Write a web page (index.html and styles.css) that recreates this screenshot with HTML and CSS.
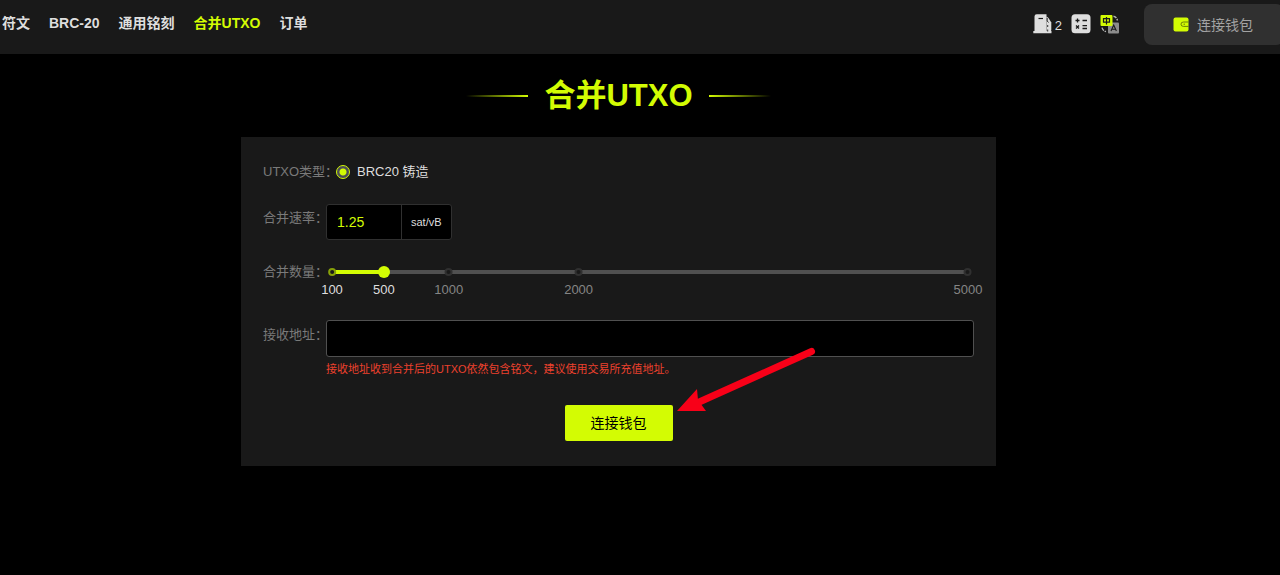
FILE: index.html
```html
<!DOCTYPE html>
<html lang="zh-CN">
<head>
<meta charset="utf-8">
<meta name="viewport" content="width=device-width, initial-scale=1">
<title>合并UTXO</title>
<link rel="stylesheet" href="styles.css">
</head>
<body>
<header class="topbar">
  <nav class="nav">
    <a class="nav-link" href="#">符文</a>
    <a class="nav-link" href="#">BRC-20</a>
    <a class="nav-link" href="#">通用铭刻</a>
    <a class="nav-link active" href="#">合并UTXO</a>
    <a class="nav-link" href="#">订单</a>
  </nav>
  <div class="tools">
    <button class="tool" type="button" aria-label="Gas 2">
      <svg width="20" height="20" viewBox="0 0 20 20" aria-hidden="true">
        <path d="M1.500 17V2.500Q1.500 .3 3.700 .3H13.500V17H18.500V19.300H.3V17Z" fill="#dedede"/>
        <path d="M13.500 2.500L15.500 4L18.300 8.500V16Q18.300 18 16.500 18H13.500Z" fill="#dedede"/>
        <path d="M5.500 4.500H10" stroke="#1a1a1a" stroke-width="1.200"/>
        <path d="M14.200 4V7L15.500 8.500M14.700 11V13M14.700 15.500V17.500" fill="none" stroke="#1a1a1a" stroke-width=".9"/>
      </svg>
      <span class="gas">2</span>
    </button>
    <button class="tool" type="button" aria-label="计算器">
      <svg width="20" height="20" viewBox="0 0 20 20" aria-hidden="true">
        <rect x=".5" y=".3" width="19" height="19" rx="3.500" fill="#dedede"/>
        <path d="M4.500 6.500H8.500M6.500 4.500V8.500M11.500 6.500H16M5 11.500L8 14.500M8 11.500L5 14.500M11.500 11.700H16M11.500 14.500H16" stroke="#1a1a1a" stroke-width="1.300"/>
      </svg>
    </button>
    <button class="tool" type="button" aria-label="语言">
      <svg width="20" height="20" viewBox="0 0 20 20" aria-hidden="true">
        <rect x="8" y="8.500" width="11" height="11" rx="1" fill="#8c8c8c"/>
        <path d="M11 17L13.700 11L16.400 17M12 15.200H15.400" fill="none" stroke="#1a1a1a" stroke-width="1.100"/>
        <rect x=".5" y="1" width="12" height="11" rx="1" fill="#d3fc03"/>
        <path d="M3.500 4.700H9.500V8.200H3.500ZM6.500 3V10.500" fill="none" stroke="#1a1a1a" stroke-width="1.200"/>
        <path d="M13.500 2.200Q16.500 2.700 17.500 6.500M2 13.700Q2.800 16.800 6 17.700" fill="none" stroke="#b5b5b5" stroke-width="1.400" stroke-dasharray="3.500 1"/>
      </svg>
    </button>
  </div>
  <button class="wallet" type="button">
    <svg width="16" height="16" viewBox="0 0 16 16" aria-hidden="true">
      <rect x=".5" y=".5" width="15" height="14" rx="2" fill="#d3fc03"/>
      <path d="M15.500 5H10.500Q8 5 8 7.200Q8 9.400 10.500 9.400H15.500M10.500 7.200H12" fill="none" stroke="#53610a" stroke-width=".8"/>
    </svg>
    <span>连接钱包</span>
  </button>
</header>

<main class="page">
  <h1 class="title">合并UTXO</h1>
  <form class="panel">
    <div class="row row-type">
      <span class="label label-wide">UTXO类型：</span>
      <label class="choice"><input class="radio" type="radio" name="type" checked>BRC20 铸造</label>
    </div>
    <div class="row row-rate">
      <label class="label" for="rate">合并速率：</label>
      <div class="rate">
        <input class="rate-input" id="rate" type="text" value="1.25">
        <span class="unit">sat/vB</span>
      </div>
    </div>
    <div class="row row-count">
      <label class="label" for="count">合并数量：</label>
      <div class="slider">
        <input class="range" id="count" type="range" min="100" max="5000" step="100" value="500">
        <div class="marks">
          <span class="mark on" style="left:0%">100</span>
          <span class="mark on current" style="left:8.163%">500</span>
          <span class="mark" style="left:18.367%">1000</span>
          <span class="mark" style="left:38.776%">2000</span>
          <span class="mark" style="left:100%">5000</span>
        </div>
      </div>
    </div>
    <div class="row row-address">
      <label class="label" for="address">接收地址：</label>
      <div class="field">
        <input class="address" id="address" type="text">
        <p class="hint">接收地址收到合并后的UTXO依然包含铭文，建议使用交易所充值地址。</p>
      </div>
    </div>
    <div class="actions">
      <button class="submit" type="button">连接钱包</button>
      <svg class="arrow" width="142" height="66" viewBox="0 0 142 66" aria-hidden="true">
        <path d="M134.500 4.500L20 56" stroke="#f80018" stroke-width="7" stroke-linecap="round"/>
        <path d="M0 64L20 42L21 53L29 64Z" fill="#f80018"/>
      </svg>
    </div>
  </form>
</main>
</body>
</html>
```
FILE: styles.css
```css
*,
*::before,
*::after { box-sizing: border-box; }

body {
  margin: 0;
  background: #000;
  color: #dedede;
  font-family: "Liberation Sans", "Noto Sans CJK SC", sans-serif;
  font-size: 13px;
  line-height: 20px;
}

button, input { font: inherit; }
button { border: 0; cursor: pointer; }

.topbar {
  display: flex;
  align-items: flex-start;
  padding: 4px 0 9px 2px;
  background: #191919;
  overflow: hidden;
}

.nav {
  display: flex;
  flex: 1;
  gap: 19px;
  padding-top: 9px;
  white-space: nowrap;
}

.nav-link {
  color: #dedede;
  font-size: 14px;
  font-weight: bold;
  text-decoration: none;
}

.nav-link.active { color: #d3fc03; }

.tools {
  display: flex;
  gap: 9px;
  padding: 10px 24px 0 0;
}

.tool {
  display: flex;
  gap: 2px;
  padding: 0;
  background: none;
  color: #dedede;
}

.gas { padding-top: 2px; }

.wallet {
  display: flex;
  align-items: center;
  gap: 8px;
  height: 41px;
  margin-right: -4px;
  padding: 0 31px 0 29px;
  border-radius: 8px;
  background: #303030;
  color: #a3a3a3;
  font-size: 14px;
  white-space: nowrap;
}

.page { padding: 20px 43px 24px 0; }

.title {
  display: flex;
  align-items: center;
  justify-content: center;
  gap: 16px;
  margin: 0;
  color: #d3fc03;
  font-size: 31px;
  line-height: 44px;
}

.title::before,
.title::after {
  content: "";
  width: 62px;
  height: 2px;
  background: linear-gradient(to right, transparent, #d3fc03);
}

.title::after { background: linear-gradient(to left, transparent, #d3fc03); }

.panel {
  max-width: 755px;
  margin: 19px auto 0;
  padding: 25px 22px;
  background: #191919;
}

.row {
  display: flex;
  align-items: flex-start;
}

.label {
  flex: none;
  width: 63px;
  color: #7a7a7a;
  white-space: nowrap;
}

.label-wide { width: 73px; }

.choice {
  display: flex;
  align-items: center;
  gap: 7px;
}

.radio {
  appearance: none;
  width: 14px;
  height: 14px;
  margin: 0;
  border: 1px solid #d3fc03;
  border-radius: 50%;
  background: radial-gradient(circle, #d3fc03 3px, #4d4d55 4px);
}

.row-rate { margin-top: 22px; }
.row-rate .label { padding-top: 4px; }

.rate {
  display: flex;
  height: 36px;
  border: 1px solid #303030;
  border-radius: 3px;
  background: #000;
}

.rate-input {
  width: 75px;
  padding: 0 10px;
  border: 0;
  border-right: 1px solid #303030;
  background: none;
  color: #d3fc03;
  font-size: 14px;
}

.unit {
  padding: 7px 9px;
  font-size: 11px;
}

.row-count { margin-top: 22px; }

.slider {
  position: relative;
  flex: 1;
  height: 40px;
}

.range {
  appearance: none;
  display: block;
  width: 100%;
  height: 20px;
  margin: 0;
  background: linear-gradient(to right, #d3fc03 9%, #505050 9%) center / calc(100% - 12px) 4px no-repeat;
}

.range::-webkit-slider-thumb {
  appearance: none;
  width: 12px;
  height: 12px;
  border-radius: 50%;
  background: #d3fc03;
}

.marks {
  position: absolute;
  inset: 0 6px;
  pointer-events: none;
}

.mark {
  position: absolute;
  top: 6px;
  display: flex;
  flex-direction: column;
  align-items: center;
  gap: 4px;
  color: #858585;
  transform: translateX(-50%);
}

.mark::before {
  content: "";
  width: 8px;
  height: 8px;
  border: 2px solid #303030;
  border-radius: 50%;
  background: #191919;
}

.mark.on { color: #dedede; }
.mark.on::before { border-color: #87a009; }
.mark.current::before { visibility: hidden; }

.row-address { margin-top: 18px; }
.row-address .label { padding-top: 5px; }

.field { flex: 1; }

.address {
  display: block;
  width: 100%;
  height: 37px;
  padding: 0 10px;
  border: 1px solid #505050;
  border-radius: 3px;
  background: #000;
  color: #dedede;
}

.hint {
  margin: 2px 0 0;
  color: #ed412d;
  font-size: 11px;
}

.actions {
  position: relative;
  display: flex;
  justify-content: center;
  margin-top: 26px;
}

.submit {
  height: 36px;
  padding: 0 26px;
  border-radius: 2px;
  background: #d3fc03;
  color: #000;
  font-size: 14px;
}

.arrow {
  position: absolute;
  bottom: 28px;
  left: calc(50% + 58px);
  fill: none;
  pointer-events: none;
}
```
